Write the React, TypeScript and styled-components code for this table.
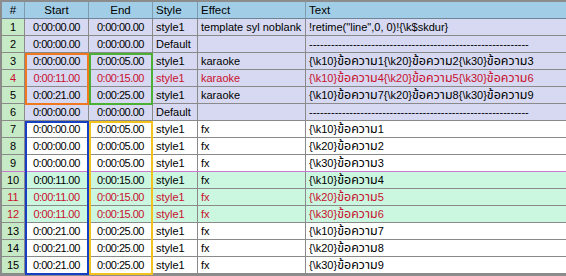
import React, { FC } from 'react';
import styled, { createGlobalStyle, css } from 'styled-components';

const GlobalStyle = createGlobalStyle`
  html, body {
    margin: 0;
    padding: 0;
    background: #8c8c8c;
  }
  body {
    font-family: "Liberation Sans", "Noto Sans", "Noto Sans Thai", sans-serif;
    font-size: 11px;
  }
`;

type RowKind = 'comment' | 'plain' | 'active';
type Align = 'left' | 'center';

const rowBg: Record<RowKind, string> = {
  comment: '#d6d9f1',
  plain: '#ffffff',
  active: '#cbf6e0',
};

const COLS = [23, 64, 64, 45, 108];

const StyledWrapper = styled.div`
  position: relative;
  width: 566px;
  height: 276px;
  box-sizing: border-box;
  padding: 2px 0 0 2px;
  background: #8c8c8c;
  overflow: hidden;
`;

const StyledHeader = styled.div`
  display: flex;
  height: 16px;
  background: #a2cde6;
  border-bottom: 1px solid #6f8596;
`;

const StyledHeadCell = styled.div<{ $w?: number; $align: Align }>`
  ${({ $w }) =>
    $w
      ? css`
          width: ${$w}px;
          flex: none;
        `
      : css`
          flex: 1;
        `}
  box-sizing: border-box;
  border-right: 1px solid #7f9bb0;
  padding: 0 3px;
  line-height: 16px;
  font-size: 11.5px;
  color: #000;
  text-align: ${({ $align }) => $align};
  white-space: nowrap;
  &:last-child {
    border-right: none;
  }
`;

const StyledRow = styled.div<{ $kind: RowKind; $line?: string }>`
  display: flex;
  height: 16px;
  background: ${({ $kind }) => rowBg[$kind]};
  border-bottom: 1px solid ${({ $line }) => $line || '#8a8a8a'};
`;

const StyledCell = styled.div<{ $w?: number; $align: Align; $red?: boolean; $time?: boolean }>`
  ${({ $w }) =>
    $w
      ? css`
          width: ${$w}px;
          flex: none;
        `
      : css`
          flex: 1;
        `}
  box-sizing: border-box;
  border-right: 1px solid #8a8a8a;
  padding: 0 3px;
  line-height: 16px;
  color: ${({ $red }) => ($red ? '#c8102e' : '#000')};
  text-align: ${({ $align }) => $align};
  letter-spacing: ${({ $time }) => ($time ? '-0.5px' : 'normal')};
  white-space: nowrap;
  overflow: hidden;
  &:last-child {
    border-right: none;
  }
`;

const StyledNumCell = styled(StyledCell)`
  background: #c6eac6;
  padding: 0;
`;

const StyledThai = styled.span`
  font-size: 12.5px;
`;

const StyledMark = styled.div<{ $color: string; $x: number; $y: number; $h: number }>`
  position: absolute;
  left: ${({ $x }) => $x}px;
  top: ${({ $y }) => $y}px;
  width: 64px;
  height: ${({ $h }) => $h}px;
  box-sizing: border-box;
  border: 2px solid ${({ $color }) => $color};
  pointer-events: none;
`;

type Line = {
  start: string;
  end: string;
  style: string;
  effect: string;
  text: string;
  kind: RowKind;
  red?: boolean;
  line?: string;
};

const DASH = '-'.repeat(60);
const T = 'ข้อความ';

const lines: Line[] = [
  { start: '0:00:00.00', end: '0:00:00.00', style: 'style1', effect: 'template syl noblank', text: '!retime("line",0, 0)!{\\k$skdur}', kind: 'comment' },
  { start: '0:00:00.00', end: '0:00:00.00', style: 'Default', effect: '', text: DASH, kind: 'comment' },
  { start: '0:00:00.00', end: '0:00:05.00', style: 'style1', effect: 'karaoke', text: `{\\k10}${T}1{\\k20}${T}2{\\k30}${T}3`, kind: 'comment' },
  { start: '0:00:11.00', end: '0:00:15.00', style: 'style1', effect: 'karaoke', text: `{\\k10}${T}4{\\k20}${T}5{\\k30}${T}6`, kind: 'comment', red: true },
  { start: '0:00:21.00', end: '0:00:25.00', style: 'style1', effect: 'karaoke', text: `{\\k10}${T}7{\\k20}${T}8{\\k30}${T}9`, kind: 'comment' },
  { start: '0:00:00.00', end: '0:00:00.00', style: 'Default', effect: '', text: DASH, kind: 'comment' },
  { start: '0:00:00.00', end: '0:00:05.00', style: 'style1', effect: 'fx', text: `{\\k10}${T}1`, kind: 'plain' },
  { start: '0:00:00.00', end: '0:00:05.00', style: 'style1', effect: 'fx', text: `{\\k20}${T}2`, kind: 'plain' },
  { start: '0:00:00.00', end: '0:00:05.00', style: 'style1', effect: 'fx', text: `{\\k30}${T}3`, kind: 'plain', line: '#c879d2' },
  { start: '0:00:11.00', end: '0:00:15.00', style: 'style1', effect: 'fx', text: `{\\k10}${T}4`, kind: 'active' },
  { start: '0:00:11.00', end: '0:00:15.00', style: 'style1', effect: 'fx', text: `{\\k20}${T}5`, kind: 'active', red: true },
  { start: '0:00:11.00', end: '0:00:15.00', style: 'style1', effect: 'fx', text: `{\\k30}${T}6`, kind: 'active', red: true },
  { start: '0:00:21.00', end: '0:00:25.00', style: 'style1', effect: 'fx', text: `{\\k10}${T}7`, kind: 'plain' },
  { start: '0:00:21.00', end: '0:00:25.00', style: 'style1', effect: 'fx', text: `{\\k20}${T}8`, kind: 'plain' },
  { start: '0:00:21.00', end: '0:00:25.00', style: 'style1', effect: 'fx', text: `{\\k30}${T}9`, kind: 'plain' },
];

// wrap each Thai run so it can be sized like the original's Thai face
const renderText = (text: string) =>
  text.split(/([\u0E00-\u0E7F]+)/).map((part, i) =>
    /[\u0E00-\u0E7F]/.test(part) ? <StyledThai key={i}>{part}</StyledThai> : part,
  );

const SubtitleGrid: FC = () => {
  return (
    <StyledWrapper>
      <StyledHeader>
        <StyledHeadCell $w={COLS[0]} $align="center">#</StyledHeadCell>
        <StyledHeadCell $w={COLS[1]} $align="center">Start</StyledHeadCell>
        <StyledHeadCell $w={COLS[2]} $align="center">End</StyledHeadCell>
        <StyledHeadCell $w={COLS[3]} $align="left">Style</StyledHeadCell>
        <StyledHeadCell $w={COLS[4]} $align="left">Effect</StyledHeadCell>
        <StyledHeadCell $align="left">Text</StyledHeadCell>
      </StyledHeader>
      {lines.map((l, i) => (
        <StyledRow key={i} $kind={l.kind} $line={l.line}>
          <StyledNumCell $w={COLS[0]} $align="center" $red={l.red}>{i + 1}</StyledNumCell>
          <StyledCell $w={COLS[1]} $align="center" $red={l.red} $time>{l.start}</StyledCell>
          <StyledCell $w={COLS[2]} $align="center" $red={l.red} $time>{l.end}</StyledCell>
          <StyledCell $w={COLS[3]} $align="left" $red={l.red}>{l.style}</StyledCell>
          <StyledCell $w={COLS[4]} $align="left" $red={l.red}>{l.effect}</StyledCell>
          <StyledCell $align="left" $red={l.red}>{renderText(l.text)}</StyledCell>
        </StyledRow>
      ))}
      <StyledMark $color="#f0781e" $x={25} $y={53} $h={52} />
      <StyledMark $color="#4cb035" $x={89} $y={53} $h={52} />
      <StyledMark $color="#1640c4" $x={25} $y={121} $h={154} />
      <StyledMark $color="#f4c21e" $x={89} $y={121} $h={154} />
    </StyledWrapper>
  );
};

const App: FC = () => (
  <>
    <GlobalStyle />
    <SubtitleGrid />
  </>
);

export default App;
